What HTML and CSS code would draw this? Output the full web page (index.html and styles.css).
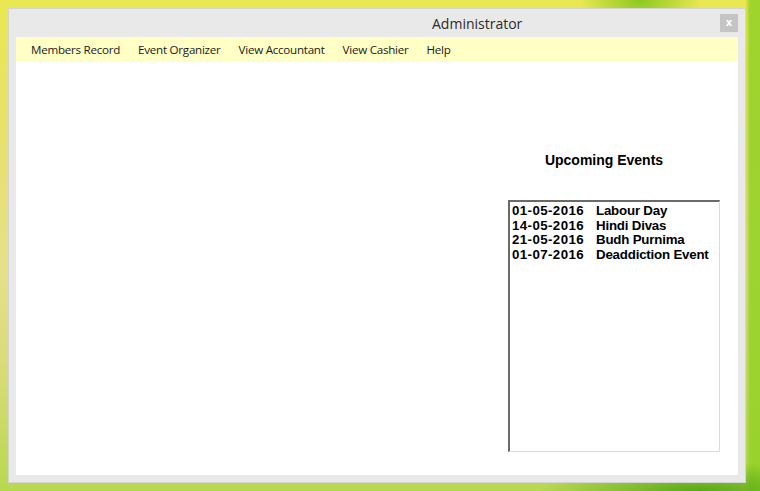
FILE: index.html
```html
<!DOCTYPE html>
<html>
<head>
<meta charset="utf-8">
<link rel="stylesheet" href="styles.css">
</head>
<body>
<div class="desktop">
  <div class="window">
    <div class="titlebar">
      <span class="title">Administrator</span>
      <span class="close">x</span>
    </div>
    <div class="menubar">
      <span class="menu-item">Members Record</span>
      <span class="menu-item">Event Organizer</span>
      <span class="menu-item">View Accountant</span>
      <span class="menu-item">View Cashier</span>
      <span class="menu-item">Help</span>
    </div>
    <div class="client">
      <div class="events">
        <div class="events-title">Upcoming Events</div>
        <div class="listbox">
          <div class="row"><span class="date">01-05-2016</span><span class="name">Labour Day</span></div>
          <div class="row"><span class="date">14-05-2016</span><span class="name">Hindi Divas</span></div>
          <div class="row"><span class="date">21-05-2016</span><span class="name">Budh Purnima</span></div>
          <div class="row"><span class="date">01-07-2016</span><span class="name">Deaddiction Event</span></div>
        </div>
      </div>
    </div>
  </div>
</div>
</body>
</html>
```

FILE: styles.css
```css
html, body {
  margin: 0;
  padding: 0;
}
.desktop {
  width: 760px;
  height: 491px;
  box-sizing: border-box;
  padding: 8px 14px 8px 8px;
  background:
    radial-gradient(ellipse 60px 40px at 640px 0px, #8cc820 0%, rgba(140,200,32,0) 100%),
    radial-gradient(ellipse 160px 30px at 700px 491px, #58a818 0%, rgba(88,168,24,0) 100%),
    linear-gradient(90deg, rgba(0,0,0,0) 0px, rgba(0,0,0,0) 745px, rgba(150,210,40,0.9) 750px),
    linear-gradient(180deg, #e8e850 0%, #e8e070 30%, #e6e08a 55%, #d8dc78 75%, #b8d850 100%);
}
.window {
  width: 738px;
  height: 475px;
  box-sizing: border-box;
  background: #e9e9e9;
  border: 1px solid #d4d4d4;
  display: flex;
  flex-direction: column;
  padding: 0 7px 7px 7px;
}
.titlebar {
  height: 28px;
  flex: none;
  display: flex;
  align-items: center;
  position: relative;
}
.title {
  font-family: "Open Sans", "Noto Sans", sans-serif;
  font-size: 14px;
  color: #2b2b2b;
  margin-left: 416px;
  margin-top: 1px;
}
.close {
  position: absolute;
  right: 0;
  top: 5px;
  width: 18px;
  height: 18px;
  background: #c4c4c4;
  color: #ffffff;
  font-family: "DejaVu Sans", sans-serif;
  font-size: 10px;
  font-weight: bold;
  display: flex;
  align-items: center;
  justify-content: center;
  line-height: 1;
}
.menubar {
  height: 25px;
  flex: none;
  background: #ffffc6;
  display: flex;
  align-items: center;
  padding-left: 15px;
  gap: 18px;
}
.menu-item {
  font-family: "Open Sans", "Noto Sans", sans-serif;
  font-size: 11.6px;
  color: #1a1a1a;
  letter-spacing: -0.25px;
}
.client {
  flex: 1;
  background: #ffffff;
  display: flex;
  justify-content: flex-end;
  padding-right: 18px;
}
.events {
  width: 212px;
  display: flex;
  flex-direction: column;
  padding-top: 89px;
}
.events-title {
  font-family: "Liberation Sans", Arial, sans-serif;
  font-weight: bold;
  font-size: 14px;
  color: #000;
  text-align: center;
  margin-left: -20px;
  height: 18px;
  padding-top: 1px;
}
.listbox {
  margin-top: 30px;
  height: 252px;
  box-sizing: border-box;
  border-top: 2px solid #6a6a6a;
  border-left: 2px solid #6a6a6a;
  border-right: 1px solid #dcdcdc;
  border-bottom: 1px solid #dcdcdc;
  padding: 2px 0 0 2px;
  font-family: "Liberation Sans", Arial, sans-serif;
  font-weight: bold;
  font-size: 13.3px;
  color: #000;
}
.row {
  display: grid;
  grid-template-columns: 84px auto;
  line-height: 14.67px;
  white-space: nowrap;
}
.date {
  letter-spacing: 0.4px;
}
.name {
  letter-spacing: -0.2px;
}
```
